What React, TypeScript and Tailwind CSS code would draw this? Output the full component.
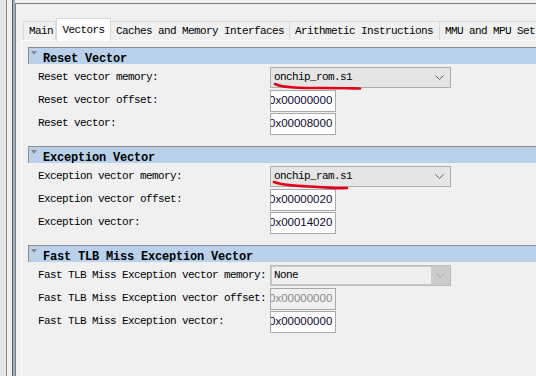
import React from 'react';

const mono = "font-['Liberation_Mono',monospace] text-[11px] tracking-[-0.6px] text-black";
const sans = "font-['Liberation_Sans',Arial,sans-serif] text-[11.5px]";

const tabs = [
  { label: 'Main', width: 'w-[33px]' },
  { label: 'Vectors', width: 'w-[55px]', active: true },
  { label: 'Caches and Memory Interfaces', width: 'w-[179px]' },
  { label: 'Arithmetic Instructions', width: 'w-[150px]' },
  { label: 'MMU and MPU Settings', width: 'w-[130px]' },
];

const sections = [
  {
    title: 'Reset Vector',
    memLabel: 'Reset vector memory:',
    memValue: 'onchip_rom.s1',
    offsetLabel: 'Reset vector offset:',
    offset: '0x00000000',
    vectorLabel: 'Reset vector:',
    vector: '0x00008000',
  },
  {
    title: 'Exception Vector',
    memLabel: 'Exception vector memory:',
    memValue: 'onchip_ram.s1',
    offsetLabel: 'Exception vector offset:',
    offset: '0x00000020',
    vectorLabel: 'Exception vector:',
    vector: '0x00014020',
  },
  {
    title: 'Fast TLB Miss Exception Vector',
    memLabel: 'Fast TLB Miss Exception vector memory:',
    memValue: 'None',
    offsetLabel: 'Fast TLB Miss Exception vector offset:',
    offset: '0x00000000',
    vectorLabel: 'Fast TLB Miss Exception vector:',
    vector: '0x00000000',
    disabled: true,
  },
];

const Chevron = ({ color }: { color: string }) => (
  <svg width="9" height="6" viewBox="0 0 9 6" className="shrink-0">
    <polyline points="0.5,0.5 4.5,4.5 8.5,0.5" fill="none" stroke={color} strokeWidth="1" />
  </svg>
);

const Combo = ({ value, disabled }: { value: string; disabled?: boolean }) =>
  disabled ? (
    <div className="flex h-[21px] w-[181px] border border-[#bcbcbc] bg-[#cccccc] p-px">
      <div className={`flex flex-1 items-center bg-[#efefef] pl-[2px] ${mono} text-[#6d6d6d]`}>{value}</div>
      <div className="flex w-[18px] items-center justify-center">
        <Chevron color="#a8a8a8" />
      </div>
    </div>
  ) : (
    <div className={`flex h-[21px] w-[181px] items-center border border-[#adadad] bg-[#e5e5e5] pl-[3px] pr-[6px] ${mono}`}>
      <span>{value}</span>
      <span className="ml-auto">
        <Chevron color="#606060" />
      </span>
    </div>
  );

const Field = ({ value, disabled }: { value: string; disabled?: boolean }) => (
  <div
    className={`flex h-[22px] w-[66px] items-center overflow-hidden border border-[#a9a9a9] ${
      disabled ? 'bg-[#f0f0f0] text-[#8a8a8a]' : 'bg-white text-[#0a0a30]'
    } ${sans}`}
  >
    <span className="-ml-[2px] whitespace-nowrap">{value}</span>
  </div>
);

const Row = ({ label, children }: { label: string; children: React.ReactNode }) => (
  <div className="flex h-[23px] items-center">
    <div className={`w-[242px] shrink-0 whitespace-nowrap pl-[10px] ${mono}`}>{label}</div>
    {children}
  </div>
);

export default function App() {
  return (
    <div className="relative flex h-[376px] w-[536px] overflow-hidden bg-[#f0f0f0]">
      {/* window frame on the left */}
      <div className="flex h-full shrink-0">
        <div className="w-[6px] bg-[#e6e6e6]" />
        <div className="w-px bg-[#8a8a8a]" />
        <div className="w-[5px] bg-[#f0f0f0]" />
        <div className="w-px bg-[#5a5a5a]" />
        <div className="w-[2px] bg-[#9cb0ca]" />
      </div>

      <div className="mt-[3px] flex min-w-0 flex-1 flex-col border-l border-t border-[#7c7c7c] pl-[5px] pt-[14px]">
        {/* tabs */}
        <div className="flex h-[22px] items-end pl-[2px]">
          {tabs.map((t) =>
            t.active ? (
              <div
                key={t.label}
                className={`relative z-10 -mb-px flex h-[23px] shrink-0 items-center justify-center border-x border-t border-[#d9d9d9] bg-white ${t.width} ${mono}`}
              >
                {t.label}
              </div>
            ) : (
              <div
                key={t.label}
                className={`flex h-[19px] shrink-0 items-center whitespace-nowrap border-r border-t border-[#d9d9d9] bg-[#f0f0f0] pl-[5px] first:border-l ${t.width} ${mono}`}
              >
                {t.label}
              </div>
            )
          )}
        </div>

        {/* tab pane */}
        <div className="flex-1 border-l border-t border-white pl-[6px] pt-[6px]">
          {sections.map((s) => (
            <div key={s.title} className="mb-[11px]">
              <div className="relative h-[17px] overflow-hidden border-l border-t border-[#8c8c8c] bg-[#b9d1ea] pl-[14px]">
                <svg width="6" height="4" viewBox="0 0 6 4" className="absolute left-[2px] top-[3px]">
                  <polygon points="0,0 6,0 3,4" fill="#8a8a8a" />
                </svg>
                <div className="whitespace-nowrap pt-[5px] font-['Liberation_Mono',monospace] text-[12px] font-bold leading-[12px] tracking-[-0.2px] text-black">
                  {s.title}
                </div>
              </div>
              <div className="mt-[2px]">
                <Row label={s.memLabel}>
                  <Combo value={s.memValue} disabled={s.disabled} />
                </Row>
                <Row label={s.offsetLabel}>
                  <Field value={s.offset} disabled={s.disabled} />
                </Row>
                <Row label={s.vectorLabel}>
                  <Field value={s.vector} />
                </Row>
              </div>
            </div>
          ))}
        </div>
      </div>

      {/* red hand-drawn annotations */}
      <svg className="pointer-events-none absolute left-0 top-0" width="536" height="376">
        <path
          d="M275 84 C 283 88, 300 88, 325 88 S 352 88.5, 360 88.5"
          fill="none"
          stroke="#e3001b"
          strokeWidth="2.6"
          strokeLinecap="round"
        />
        <path
          d="M274 182 C 284 186, 300 186, 318 187 S 340 188.5, 347 188"
          fill="none"
          stroke="#e3001b"
          strokeWidth="2.6"
          strokeLinecap="round"
        />
      </svg>
    </div>
  );
}
